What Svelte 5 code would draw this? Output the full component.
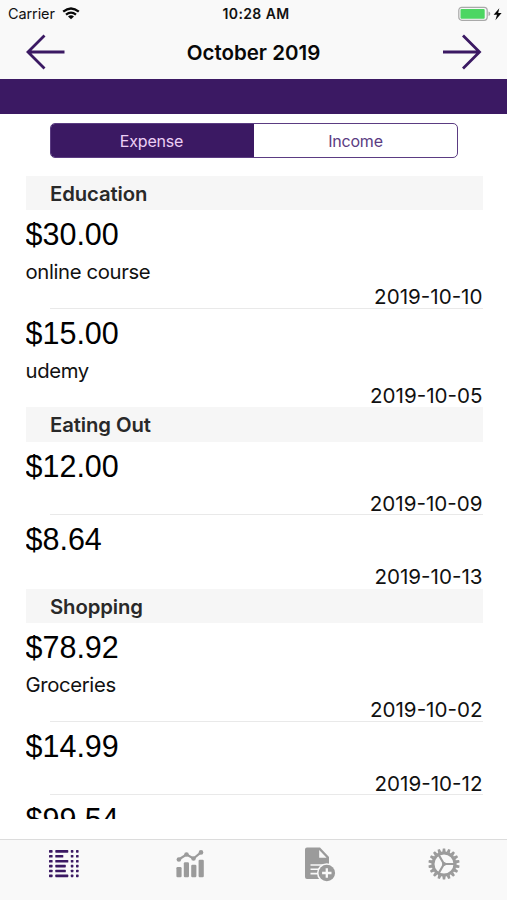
<script>
    let selectedType = $state("Expense");
    let selectedTab = $state("list");

    const types = ["Expense", "Income"];
    const categories = [
        {
            name: "Education",
            items: [
                {amount: "$30.00", note: "online course", date: "2019-10-10"},
                {amount: "$15.00", note: "udemy", date: "2019-10-05"},
            ]
        },
        {
            name: "Eating Out",
            items: [
                {amount: "$12.00", note: "", date: "2019-10-09"},
                {amount: "$8.64", note: "", date: "2019-10-13"},
            ]
        },
        {
            name: "Shopping",
            items: [
                {amount: "$78.92", note: "Groceries", date: "2019-10-02"},
                {amount: "$14.99", note: "", date: "2019-10-12"},
                {amount: "$99.54", note: "", date: ""},
            ]
        },
    ];
    // width of the bar in each line of the list icon
    const listBars = [13, 8, 13, 10.5, 10.5, 13];
    const teeth = Array.from({length: 18}, (_, i) => i * 20);
</script>

<div class="screen">
    <header>
        <div class="status">
            <div class="carrier">
                <span>Carrier</span>
                <svg width="18" height="13" viewBox="0 0 18 13" fill="none" stroke="#080808" stroke-width="2.3">
                    <path d="M1.2 4.7Q9-1.8 16.8 4.7" />
                    <path d="M4 7.6Q9 3.6 14 7.6" />
                    <path d="M9 12.3L6 9.4Q9 7.2 12 9.4Z" fill="#080808" stroke="none" />
                </svg>
            </div>
            <span class="time">10:28 AM</span>
            <div class="battery">
                <svg width="45" height="16" viewBox="0 0 45 16">
                    <rect x=".8" y="1.3" width="28.4" height="13" rx="3" fill="#f8f8f8" stroke="#a9a9a9" stroke-width="1.2" />
                    <rect x="2.5" y="3" width="24.2" height="9.7" rx="1" fill="#4cd662" />
                    <path d="M30.5 5.6Q32.3 6 32.3 7.8T30.5 10Z" fill="#a9a9a9" />
                    <path d="M41.3 2.2L35.6 8.8H39L37.4 14.2L43.6 7H40.2Z" fill="#080808" />
                </svg>
            </div>
        </div>
        <nav>
            <button aria-label="Previous month">
                <svg width="40" height="36" viewBox="0 0 40 36" fill="none" stroke="#3b1963" stroke-width="2.8">
                    <path d="M39.5 18H3M19.5 1.5L3 18L19.5 34.5" />
                </svg>
            </button>
            <h1>October 2019</h1>
            <button aria-label="Next month">
                <svg width="40" height="36" viewBox="0 0 40 36" fill="none" stroke="#3b1963" stroke-width="2.8">
                    <path d="M1 18H37.5M21 1.5L37.5 18L21 34.5" />
                </svg>
            </button>
        </nav>
    </header>
    <div class="band"></div>

    <div class="segmented">
        {#each types as type}
            <button class:selected={selectedType === type} onclick={() => selectedType = type}>{type}</button>
        {/each}
    </div>

    <main>
        {#each categories as category}
            <h2>{category.name}</h2>
            <ul>
                {#each category.items as item}
                    <li>
                        <span class="amount">{item.amount}</span>
                        {#if item.note}
                            <span class="note">{item.note}</span>
                        {/if}
                        {#if item.date}
                            <span class="date">{item.date}</span>
                        {/if}
                    </li>
                {/each}
            </ul>
        {/each}
    </main>

    <footer>
        <button class:active={selectedTab === "list"} aria-label="List" onclick={() => selectedTab = "list"}>
            <svg class="list" width="32" height="30" viewBox="0 0 32 30" fill="currentColor">
                {#each listBars as bar, i}
                    <rect x="1" y={1.1 + i * 4.9} width="3.6" height="2.6" rx=".6" />
                    <rect x="7.3" y={1.1 + i * 4.9} width={bar} height="2.6" rx=".6" />
                    <rect x="22.8" y={1.1 + i * 4.9} width="2.6" height="2.6" rx=".6" />
                    <rect x="28" y={1.1 + i * 4.9} width="2.6" height="2.6" rx=".6" />
                {/each}
            </svg>
        </button>
        <button class:active={selectedTab === "chart"} aria-label="Chart" onclick={() => selectedTab = "chart"}>
            <svg width="28" height="28" viewBox="0 0 28 28" fill="currentColor">
                <rect x=".4" y="17" width="5.2" height="10.2" rx="1.2" />
                <rect x="7.8" y="12.2" width="5.2" height="15" rx="1.2" />
                <rect x="15.2" y="14.7" width="5.2" height="12.5" rx="1.2" />
                <rect x="22.6" y="9.7" width="5.2" height="17.5" rx="1.2" />
                <path d="M2.7 9.5L10.5 4.5L17.5 8.5L25 2.4" fill="none" stroke="currentColor" stroke-width="2.2" />
                <circle cx="2.9" cy="9.5" r="2.3" />
                <circle cx="10.5" cy="4.5" r="2.3" />
                <circle cx="17.5" cy="8.5" r="2.3" />
                <circle cx="25" cy="2.4" r="2.3" />
            </svg>
        </button>
        <button class:active={selectedTab === "add"} aria-label="Add" onclick={() => selectedTab = "add"}>
            <svg class="add" width="32" height="35" viewBox="0 0 32 35" fill="currentColor">
                <path d="M3 .5H16L25 10V18H20V32H3Q1 32 1 30V2.5Q1 .5 3 .5Z" />
                <path d="M15.2 3V10.8H22.6Z" fill="#f9f9f9" />
                <path d="M6.5 18H19M6.5 22.3H19M6.5 26.6H19" stroke="#f9f9f9" stroke-width="1.6" />
                <circle cx="22.8" cy="26" r="9.8" fill="#f9f9f9" />
                <circle cx="22.8" cy="26" r="8.3" />
                <path d="M22.8 21.3V30.7M18.1 26H27.5" stroke="#f9f9f9" stroke-width="2.3" />
            </svg>
        </button>
        <button class:active={selectedTab === "settings"} aria-label="Settings" onclick={() => selectedTab = "settings"}>
            <svg width="32" height="32" viewBox="-16 -16 32 32" fill="none" stroke="currentColor">
                <circle r="11" stroke-width="3" />
                {#each teeth as angle}
                    <path d="M-1.7-12L-1.2-15.6H1.2L1.7-12Z" fill="currentColor" stroke="none" transform="rotate({angle})" />
                {/each}
                <path d="M0 0H11M0 0L-5.5-9.5M0 0L-5.5 9.5" stroke-width="2.2" />
                <circle r="2" fill="currentColor" stroke="none" />
            </svg>
        </button>
    </footer>
</div>

<style>
    :global(body) {
        margin: 0;
        background: #fff;
    }

    .screen {
        display: flex;
        flex-direction: column;
        height: 900px;
        overflow: hidden;
        font-family: Inter, "Liberation Sans", sans-serif;
        color: #111;
        background: #fff;
    }

    button {
        border: none;
        padding: 0;
        background: none;
        font-family: inherit;
        cursor: pointer;
    }

    svg {
        display: block;
    }

    header {
        height: 79px;
        background: #f9f9f9;
    }

    .status {
        display: grid;
        grid-template-columns: 1fr auto 1fr;
        align-items: center;
        height: 27px;
        padding: 0 4px 0 8px;
        font-size: 14.5px;
        letter-spacing: -0.1px;
    }

    .carrier {
        display: flex;
        align-items: center;
        gap: 7px;
    }

    .time {
        padding-left: 1px;
        font-weight: 600;
        font-size: 14px;
        letter-spacing: 0.4px;
    }

    .battery {
        display: flex;
        justify-content: flex-end;
    }

    nav {
        display: flex;
        align-items: center;
        justify-content: space-between;
        height: 50px;
        padding: 0 25px;
    }

    h1 {
        margin: 0;
        padding-top: 1px;
        font-size: 20.5px;
        font-weight: 600;
        color: #080808;
    }

    .band {
        height: 35px;
        background: #3b1963;
    }

    .segmented {
        display: flex;
        height: 33px;
        margin: 9px 49px 18px 50px;
        border: 1px solid #5b3c82;
        border-radius: 5px;
        overflow: hidden;
    }

    .segmented button {
        box-sizing: border-box;
        width: 50%;
        font-size: 16px;
        letter-spacing: -0.2px;
        color: #5b3c82;
    }

    .segmented .selected {
        padding-right: 2px;
        background: #3b1963;
        color: #eccff5;
    }

    main {
        height: 643px;
        margin: 0 24.5px 0 25.5px;
        overflow: hidden;
    }

    h2 {
        height: 34.2px;
        margin: 0;
        padding-left: 24.5px;
        background: #f6f6f6;
        font-size: 20.3px;
        font-weight: 600;
        line-height: 36px;
        letter-spacing: -0.1px;
        color: #292929;
    }

    ul {
        list-style: none;
        margin: 0;
        padding: 0;
    }

    li {
        display: flex;
        flex-direction: column;
        background: linear-gradient(#e9e9e9, #e9e9e9) 24.5px 100% / 100% 1px no-repeat;
    }

    li:last-child {
        background: none;
    }

    .amount {
        height: 49px;
        font-family: "Liberation Sans", Arial, sans-serif;
        font-size: 30.5px;
        line-height: 48px;
        color: #000;
    }

    .note {
        height: 25px;
        font-size: 20.3px;
        line-height: 25.5px;
        letter-spacing: -0.35px;
    }

    .date {
        height: 24.6px;
        font-size: 20.6px;
        line-height: 25.5px;
        text-align: right;
    }

    footer {
        display: flex;
        box-sizing: border-box;
        height: 61px;
        margin-top: auto;
        padding-bottom: 12px;
        border-top: 1px solid #dcdcdc;
        background: #f9f9f9;
    }

    footer button {
        display: flex;
        flex: 1;
        align-items: center;
        justify-content: center;
        color: #9b9b9b;
    }

    footer .active {
        color: #3b1963;
    }

    .list {
        margin-left: 2px;
    }

    .add {
        margin-left: 6px;
    }
</style>
